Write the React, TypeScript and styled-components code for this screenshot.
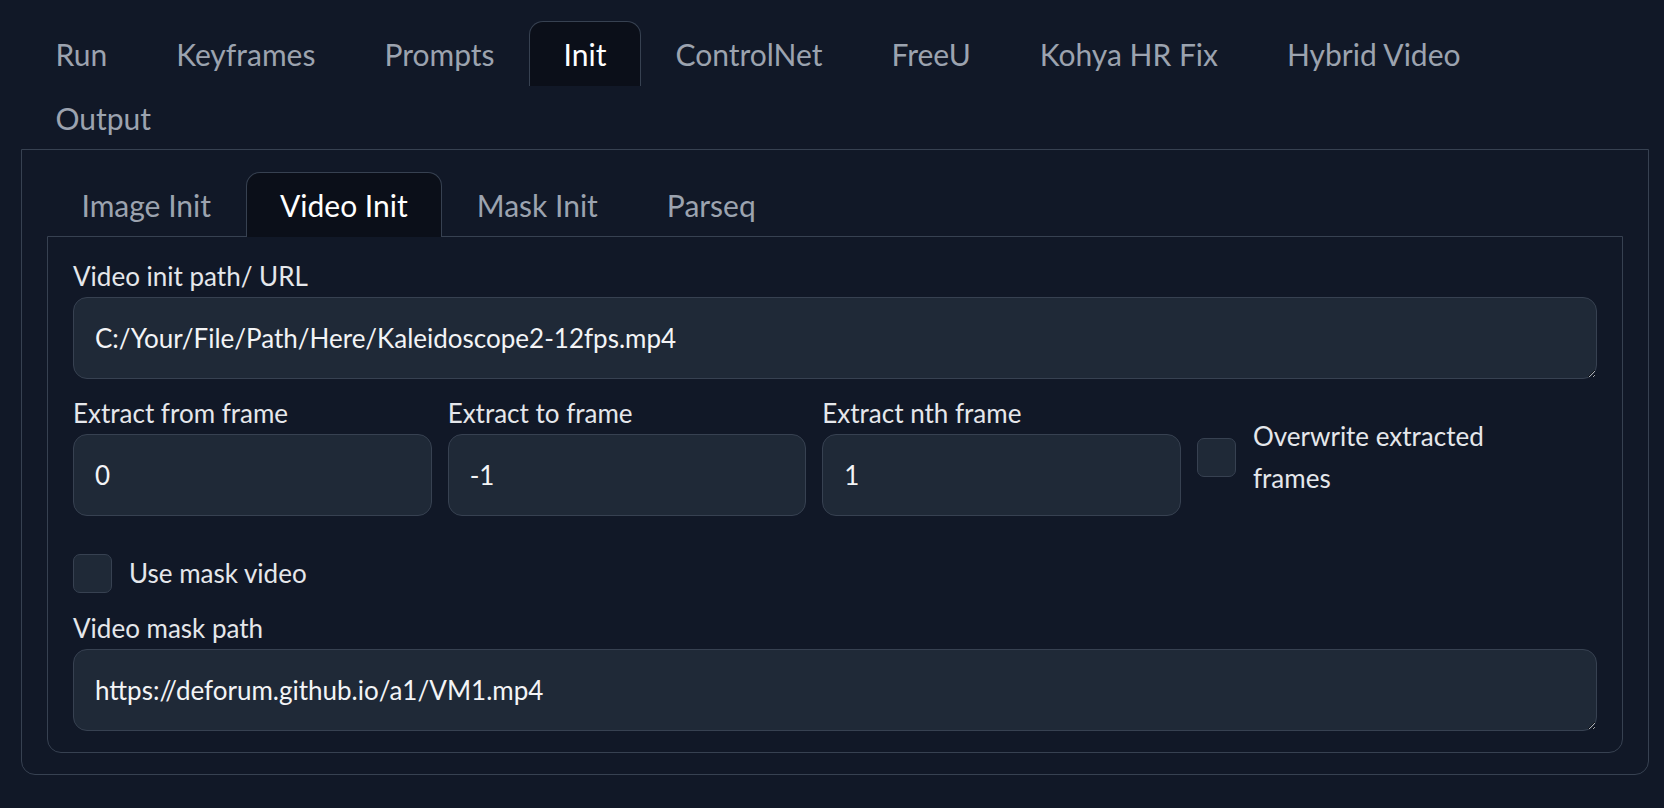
import React, { useState } from "react";
import styled, { createGlobalStyle } from "styled-components";

const GlobalStyle = createGlobalStyle`
  html, body {
    margin: 0;
    padding: 0;
    background: #111827;
  }
  body {
    font-family: Lato, "Liberation Sans", sans-serif;
    color: #e5e7eb;
  }
  * {
    box-sizing: border-box;
  }
`;

const Page = styled.div`
  min-height: 808px;
  padding: 21px 15px 0 21px;
`;

const TabNav = styled.div`
  display: flex;
  flex-wrap: wrap;
`;

const RowBreak = styled.div`
  flex-basis: 100%;
  height: 0;
`;

const TabButton = styled.button<{ $active?: boolean }>`
  position: relative;
  z-index: 1;
  height: 65px;
  margin-bottom: -1px;
  padding: 0 33.5px;
  border: 1px solid ${(p) => (p.$active ? "#374151" : "transparent")};
  border-bottom: none;
  border-radius: 14px 14px 0 0;
  background: ${(p) => (p.$active ? "#0b0f19" : "transparent")};
  color: ${(p) => (p.$active ? "#ffffff" : "#9ca3af")};
  font-family: inherit;
  font-size: 30px;
  cursor: pointer;
`;

const Panel = styled.div<{ $padding: string }>`
  border: 1px solid #374151;
  border-radius: 0 0 14px 14px;
  padding: ${(p) => p.$padding};
`;

const Form = styled.div`
  display: flex;
  flex-direction: column;
  gap: 16px;
`;

const Field = styled.label`
  display: flex;
  flex-direction: column;
`;

const FieldLabel = styled.span`
  font-size: 26px;
  line-height: 36px;
  margin-bottom: 3px;
  color: #e5e7eb;
`;

const TextArea = styled.textarea`
  display: block;
  width: 100%;
  height: 82px;
  padding: 20px 21px;
  border: 1px solid #374151;
  border-radius: 14px;
  background: #1f2937;
  color: #f3f4f6;
  font-family: inherit;
  font-size: 26px;
  line-height: 40px;
  resize: vertical;
  overflow: hidden;
  outline: none;
  color-scheme: dark;
`;

const NumberInput = styled.input`
  display: block;
  width: 100%;
  height: 82px;
  padding: 20px 21px;
  border: 1px solid #374151;
  border-radius: 14px;
  background: #1f2937;
  color: #f3f4f6;
  font-family: inherit;
  font-size: 26px;
  line-height: 40px;
  outline: none;
`;

const FrameRow = styled.div`
  display: grid;
  grid-template-columns: repeat(3, 1fr) 400px;
  gap: 16px;
  align-items: start;
`;

const CheckRow = styled.label`
  display: flex;
  align-items: center;
  gap: 17px;
  padding-top: 20px;
  cursor: pointer;
`;

const Box = styled.input`
  appearance: none;
  flex: none;
  width: 39px;
  height: 39px;
  margin: 0;
  border: 1px solid #374151;
  border-radius: 7px;
  background: #1f2937;
  cursor: pointer;

  &:checked {
    background: #f97316;
    border-color: #f97316;
  }
`;

const CheckText = styled.span<{ $wrap?: number }>`
  font-size: 26px;
  line-height: 42px;
  color: #e5e7eb;
  max-width: ${(p) => (p.$wrap ? `${p.$wrap}px` : "none")};
`;

const mainTabs = [
  "Run",
  "Keyframes",
  "Prompts",
  "Init",
  "ControlNet",
  "FreeU",
  "Kohya HR Fix",
  "Hybrid Video",
  "Output",
];

const initTabs = ["Image Init", "Video Init", "Mask Init", "Parseq"];

const VideoInit = () => (
  <Form>
    <Field>
      <FieldLabel>Video init path/ URL</FieldLabel>
      <TextArea
        rows={1}
        defaultValue="C:/Your/File/Path/Here/Kaleidoscope2-12fps.mp4"
      />
    </Field>
    <FrameRow>
      <Field>
        <FieldLabel>Extract from frame</FieldLabel>
        <NumberInput type="text" defaultValue="0" />
      </Field>
      <Field>
        <FieldLabel>Extract to frame</FieldLabel>
        <NumberInput type="text" defaultValue="-1" />
      </Field>
      <Field>
        <FieldLabel>Extract nth frame</FieldLabel>
        <NumberInput type="text" defaultValue="1" />
      </Field>
      <CheckRow>
        <Box type="checkbox" />
        <CheckText $wrap={240}>Overwrite extracted frames</CheckText>
      </CheckRow>
    </FrameRow>
    <CheckRow>
      <Box type="checkbox" />
      <CheckText>Use mask video</CheckText>
    </CheckRow>
    <Field>
      <FieldLabel>Video mask path</FieldLabel>
      <TextArea rows={1} defaultValue="https://deforum.github.io/a1/VM1.mp4" />
    </Field>
  </Form>
);

const App = () => {
  const [mainTab, setMainTab] = useState("Init");
  const [initTab, setInitTab] = useState("Video Init");

  return (
    <Page>
      <GlobalStyle />
      <TabNav>
        {mainTabs.map((name) => (
          <React.Fragment key={name}>
            {name === "Output" && <RowBreak />}
            <TabButton
              $active={mainTab === name}
              onClick={() => setMainTab(name)}
            >
              {name}
            </TabButton>
          </React.Fragment>
        ))}
      </TabNav>
      <Panel $padding="22px 25px 21px 25px">
        {mainTab === "Init" && (
          <>
            <TabNav>
              {initTabs.map((name) => (
                <TabButton
                  key={name}
                  $active={initTab === name}
                  onClick={() => setInitTab(name)}
                >
                  {name}
                </TabButton>
              ))}
            </TabNav>
            <Panel $padding="21px 25px 21px 25px">
              {initTab === "Video Init" && <VideoInit />}
            </Panel>
          </>
        )}
      </Panel>
    </Page>
  );
};

export default App;
